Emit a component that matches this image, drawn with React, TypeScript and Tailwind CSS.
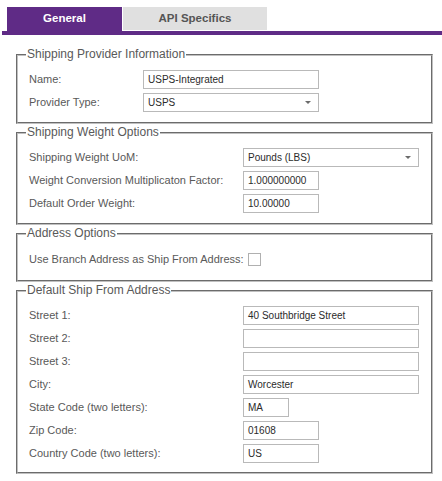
import React from "react";

const FONT = "font-['Liberation_Sans',Arial,sans-serif]";

function TextBox({ value, w }: { value?: string; w: string }) {
  return (
    <div
      className={`${w} h-[19px] border border-[#b9b9b9] bg-white pl-[4px] flex items-center text-[10px] text-[#2b2b2b] leading-none`}
    >
      {value}
    </div>
  );
}

function SelectBox({ value, w }: { value: string; w: string }) {
  return (
    <div
      className={`${w} h-[19px] border border-[#b9b9b9] bg-white pl-[4px] pr-[7px] flex items-center justify-between text-[10px] text-[#2b2b2b] leading-none`}
    >
      <span>{value}</span>
      <svg width="6" height="3" viewBox="0 0 6 3">
        <polygon points="0,0 6,0 3,3" fill="#6b6b6b" />
      </svg>
    </div>
  );
}

function Row({
  label,
  labelW,
  h = "h-[19px]",
  children,
}: {
  label: string;
  labelW: string;
  h?: string;
  children: React.ReactNode;
}) {
  return (
    <div className={`flex items-center ${h}`}>
      <div className={`${labelW} shrink-0 text-[11px] text-[#595959] leading-none whitespace-nowrap`}>{label}</div>
      {children}
    </div>
  );
}

function Group({
  title,
  pb = "pb-[10px]",
  children,
}: {
  title: string;
  pb?: string;
  children: React.ReactNode;
}) {
  return (
    <fieldset className={`border-2 [border-style:groove] border-[#c0c0c0] pl-[11px] pr-[10px] pt-[7px] ${pb} min-w-0`}>
      <legend className="ml-[-3px] px-[1px] text-[12px] leading-[17px] text-[#595959]">{title}</legend>
      <div className="flex flex-col gap-[4px]">{children}</div>
    </fieldset>
  );
}

export default function App() {
  return (
    <div className={`w-[442px] h-[481px] bg-white ${FONT}`}>
      <div className="pt-[7px]">
        <div className="flex items-start pl-[7px] gap-[1px]">
          <div className="w-[115px] h-[24px] bg-[#5f2b86] text-white font-bold text-[11.5px] flex items-center justify-center pb-[1px]">
            General
          </div>
          <div className="w-[144px] h-[23px] bg-[#e0e0e0] text-[#555] font-bold text-[11.5px] flex items-center justify-center">
            API Specifics
          </div>
        </div>
        <div className="ml-[2px] h-[4px] bg-[#5f2b86]" />
      </div>

      <div className="ml-[16px] w-[417px] mt-[11px] flex flex-col">
        <Group title="Shipping Provider Information">
          <Row label="Name:" labelW="w-[114px]">
            <TextBox value="USPS-Integrated" w="w-[176px]" />
          </Row>
          <Row label="Provider Type:" labelW="w-[114px]">
            <SelectBox value="USPS" w="w-[176px]" />
          </Row>
        </Group>

        <Group title="Shipping Weight Options">
          <Row label="Shipping Weight UoM:" labelW="w-[214px]">
            <SelectBox value="Pounds (LBS)" w="w-[176px]" />
          </Row>
          <Row label="Weight Conversion Multiplicaton Factor:" labelW="w-[214px]">
            <TextBox value="1.000000000" w="w-[76px]" />
          </Row>
          <Row label="Default Order Weight:" labelW="w-[214px]">
            <TextBox value="10.00000" w="w-[76px]" />
          </Row>
        </Group>

        <Group title="Address Options">
          <Row label="Use Branch Address as Ship From Address:" labelW="w-[219px]" h="h-[21px]">
            <div className="w-[13px] h-[13px] border border-[#b0b0b0] bg-white" />
          </Row>
        </Group>

        <Group title="Default Ship From Address" pb="pb-[9px]">
          <Row label="Street 1:" labelW="w-[214px]">
            <TextBox value="40 Southbridge Street" w="w-[176px]" />
          </Row>
          <Row label="Street 2:" labelW="w-[214px]">
            <TextBox w="w-[176px]" />
          </Row>
          <Row label="Street 3:" labelW="w-[214px]">
            <TextBox w="w-[176px]" />
          </Row>
          <Row label="City:" labelW="w-[214px]">
            <TextBox value="Worcester" w="w-[176px]" />
          </Row>
          <Row label="State Code (two letters):" labelW="w-[214px]">
            <TextBox value="MA" w="w-[46px]" />
          </Row>
          <Row label="Zip Code:" labelW="w-[214px]">
            <TextBox value="01608" w="w-[76px]" />
          </Row>
          <Row label="Country Code (two letters):" labelW="w-[214px]">
            <TextBox value="US" w="w-[76px]" />
          </Row>
        </Group>
      </div>
    </div>
  );
}
